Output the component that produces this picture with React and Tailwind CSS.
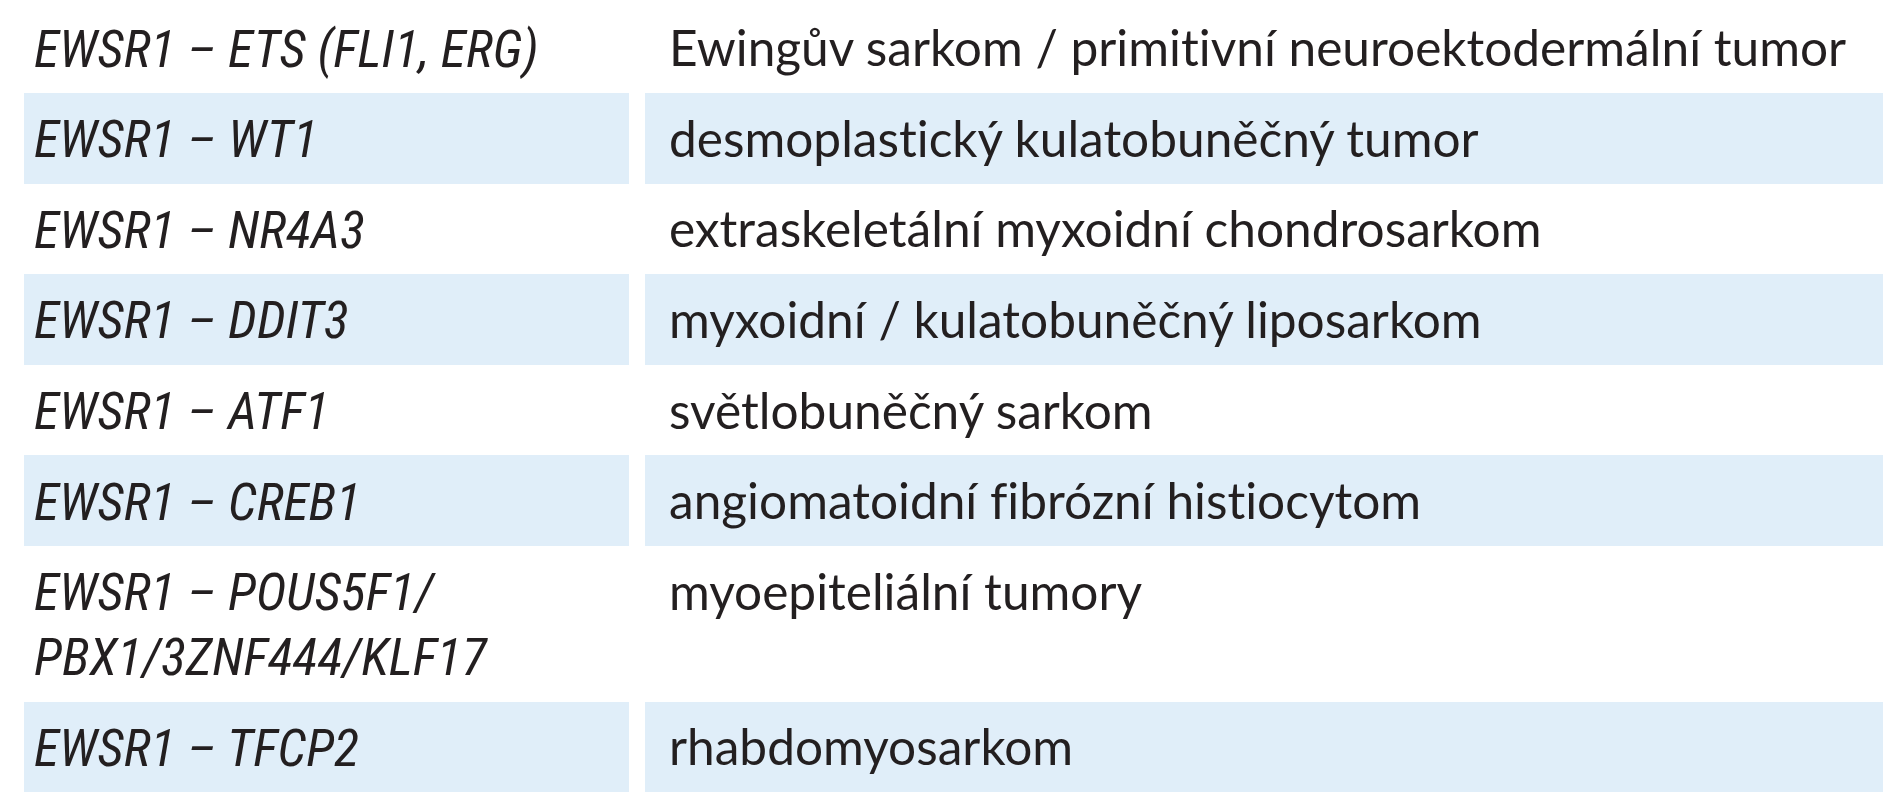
import React from "react";

const rows = [
  [["EWSR1 – ETS (FLI1, ERG)"], "Ewingův sarkom / primitivní neuroektodermální tumor"],
  [["EWSR1 – WT1"], "desmoplastický kulatobuněčný tumor"],
  [["EWSR1 – NR4A3"], "extraskeletální myxoidní chondrosarkom"],
  [["EWSR1 – DDIT3"], "myxoidní / kulatobuněčný liposarkom"],
  [["EWSR1 – ATF1"], "světlobuněčný sarkom"],
  [["EWSR1 – CREB1"], "angiomatoidní fibrózní histiocytom"],
  [["EWSR1 – POUS5F1/", "PBX1/3ZNF444/KLF17"], "myoepiteliální tumory"],
  [["EWSR1 – TFCP2"], "rhabdomyosarkom"],
];

export default function App() {
  return (
    <div className="bg-white w-[1891px] h-[800px] pt-[2.4px] pl-[24px] text-[#231f20] [font-variant-ligatures:none]">
      <div className="grid grid-cols-[605px_1238px] gap-x-4">
        {rows.map(([left, right], i) => {
          const shaded = i % 2 === 1;
          return (
            <React.Fragment key={i}>
              <div
                className={`${shaded ? "bg-[#e0eef9]" : ""} pl-[10px] pt-[14.2px] pb-[11.4px] font-['Roboto_Condensed',_'Roboto',_sans-serif] italic text-[52px] leading-[65px] whitespace-nowrap`}
              >
                {left.map((l, j) => (
                  <div key={j}>{l}</div>
                ))}
              </div>
              <div
                className={`${shaded ? "bg-[#e0eef9]" : ""} pl-[24px] pt-[12.8px] pb-[12.8px] font-['Lato',_sans-serif] text-[49.6px] leading-[65px] whitespace-nowrap`}
              >
                {right}
              </div>
            </React.Fragment>
          );
        })}
      </div>
    </div>
  );
}
